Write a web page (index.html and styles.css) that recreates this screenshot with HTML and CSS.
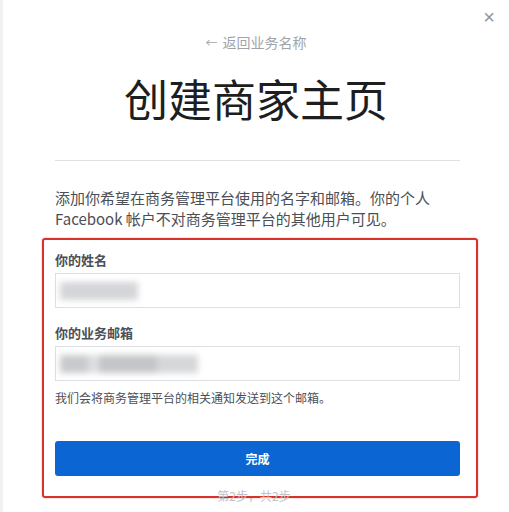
FILE: index.html
```html
<!DOCTYPE html>
<html lang="zh-CN">
<head>
    <meta charset="UTF-8">
    <meta name="viewport" content="width=device-width, initial-scale=1.0">
    <title>创建商家主页</title>
    <link rel="stylesheet" href="styles.css">
</head>
<body>
    <div class="dialog">
        <div class="top-bar">
            <span class="close">&times;</span>
        </div>
        <div class="back">
            <span class="arrow">&larr;</span> 返回业务名称
        </div>
        <h1>创建商家主页</h1>
        <div class="divider"></div>
        <p class="intro">添加你希望在商务管理平台使用的名字和邮箱。你的个人 Facebook 帐户不对商务管理平台的其他用户可见。</p>

        <div class="marked">
            <div class="form-group">
                <label>你的姓名</label>
                <div class="field">
                    <span class="blur blur-name"></span>
                </div>
            </div>
            <div class="form-group">
                <label>你的业务邮箱</label>
                <div class="field">
                    <span class="blur blur-mail"></span>
                </div>
                <p class="hint">我们会将商务管理平台的相关通知发送到这个邮箱。</p>
            </div>
            <button class="submit">完成</button>
        </div>
        <div class="step">第2步，共2步</div>
    </div>
</body>
</html>
```

FILE: styles.css
```css
body {
    margin: 0;
    background-color: #ffffff;
    font-family: "Noto Sans CJK SC", "Liberation Sans", sans-serif;
    color: #1c1e21;
}
.dialog {
    width: 509px;
    height: 512px;
    box-sizing: border-box;
    border-left: 3px solid #f1f1f1;
    overflow: hidden;
}
.top-bar {
    display: flex;
    justify-content: flex-end;
    height: 28px;
    padding: 6px 14px 0 0;
    box-sizing: border-box;
}
.close {
    font-family: "Liberation Sans", sans-serif;
    font-size: 20px;
    line-height: 22px;
    color: #8d949e;
}
.back {
    text-align: center;
    font-size: 14px;
    line-height: 18px;
    color: #a0a4aa;
    margin-top: 5px;
}
.back .arrow {
    font-size: 12px;
    margin-right: 2px;
}
h1 {
    margin: 18px 0 0;
    text-align: center;
    font-size: 44px;
    font-weight: 400;
    line-height: 56px;
    color: #1c1e21;
    letter-spacing: 0;
}
.divider {
    height: 1px;
    background-color: #dddfe2;
    margin: 34px 49px 0 52px;
}
.intro {
    margin: 26px 60px 0 52px;
    font-size: 15px;
    line-height: 21px;
    color: #4b4f56;
}
.marked {
    margin: 9px 31px 0 39px;
    border: 2px solid #d9322c;
    border-radius: 3px;
    padding: 11px 16px 20px 11px;
    box-shadow: 0 0 2px rgba(217, 50, 44, 0.4);
}
.form-group {
    display: flex;
    flex-direction: column;
}
.form-group + .form-group {
    margin-top: 16px;
}
.form-group label {
    font-size: 13px;
    font-weight: 700;
    line-height: 18px;
    color: #4b4f56;
    margin-bottom: 4px;
}
.field {
    height: 35px;
    box-sizing: border-box;
    border: 1px solid #dddfe2;
    display: flex;
    align-items: center;
    padding-left: 4px;
}
.blur {
    display: block;
    height: 18px;
    background-color: #d4d5d8;
    filter: blur(3px);
}
.blur-name {
    width: 78px;
}
.blur-mail {
    width: 138px;
    background: linear-gradient(90deg, #c9cacd 0 20%, #dedfe1 20% 28%, #c4c5c8 28% 70%, #d6d7d9 70% 100%);
}
.hint {
    margin: 9px 0 0;
    font-size: 12px;
    line-height: 16px;
    color: #4b4f56;
}
.submit {
    display: block;
    width: 100%;
    height: 35px;
    margin-top: 35px;
    border: none;
    border-radius: 3px;
    background-color: #0b66d3;
    color: #ffffff;
    font-family: inherit;
    font-size: 12px;
    font-weight: 700;
    cursor: pointer;
}
.step {
    text-align: center;
    font-size: 12px;
    line-height: 16px;
    color: #bfc2c7;
    margin-top: -10px;
    padding-right: 4px;
}
```
